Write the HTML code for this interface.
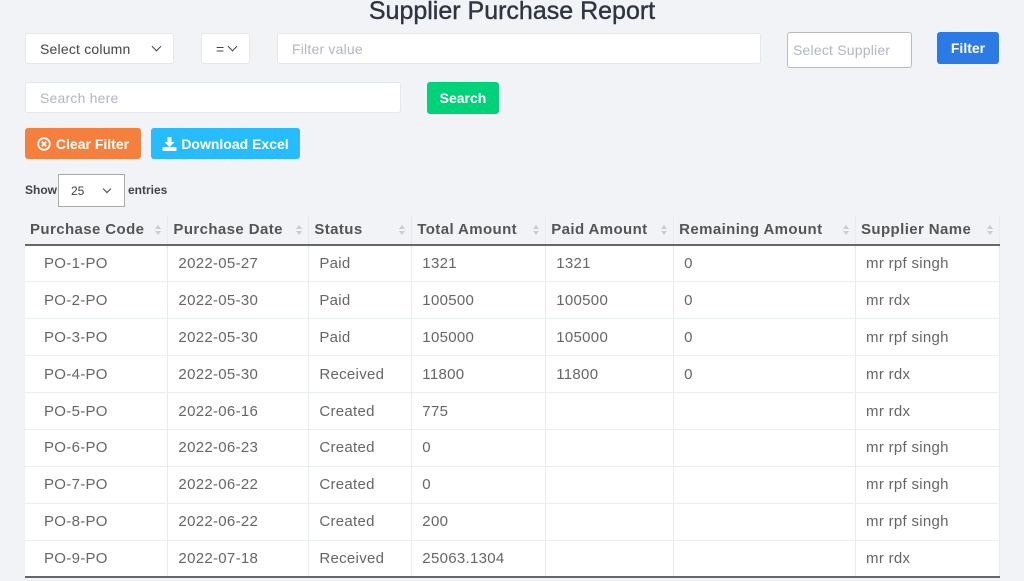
<!DOCTYPE html>
<html><head><meta charset="utf-8"><style>
*{box-sizing:border-box;margin:0;padding:0}
body{width:1024px;height:581px;background:#f2f3f6;font-family:"Liberation Sans",sans-serif;position:relative;overflow:hidden;color:#555}
.a{position:absolute}
h1{position:absolute;left:0;width:1024px;top:-3px;text-align:center;font-size:25px;font-weight:normal;color:#2f3540;-webkit-text-stroke:0.4px #2f3540}
.box{position:absolute;background:#fff;border:1px solid #e3e7ee;border-radius:3px;font-size:14px;display:flex;align-items:center;padding-left:14px;letter-spacing:.2px}
.ph{color:#b0b6c2}
.btn{position:absolute;color:#fff;font-weight:bold;font-size:14px;display:flex;align-items:center;justify-content:center;border-radius:3px}
.chev{position:absolute;width:7px;height:7px;border-right:1.5px solid #444;border-bottom:1.5px solid #444;transform:rotate(45deg)}
table{position:absolute;left:25px;top:215px;width:975px;border-collapse:collapse;font-size:15px}
th{height:30px;text-align:left;padding-left:5px;color:#555;font-weight:bold;letter-spacing:.4px;border-right:1px solid #e6ebf2;border-bottom:2px solid #666;position:relative}
th:after{content:"";position:absolute;right:6px;top:10px;border-left:3px solid transparent;border-right:3px solid transparent;border-bottom:4px solid #ccc}
th:before{content:"";position:absolute;right:6px;top:16px;border-left:3px solid transparent;border-right:3px solid transparent;border-top:4px solid #ccc}
td{height:36.9px;background:#fff;padding-left:10px;color:#666;letter-spacing:.3px;border-right:1px solid #e6ebf2;border-bottom:1px solid #e9eef5}
td:first-child{padding-left:19px}
tr:last-child td{border-bottom:2px solid #666}
</style></head><body>
<h1>Supplier Purchase Report</h1>
<div class="box" style="left:25px;top:33px;width:149px;height:31px;color:#444">Select column<span class="chev" style="left:127px;top:9px"></span></div>
<div class="box" style="left:201px;top:33px;width:49px;height:31px;color:#444">=<span class="chev" style="left:27px;top:9px"></span></div>
<div class="box ph" style="left:277px;top:33px;width:484px;height:31px">Filter value</div>
<div class="box ph" style="left:787px;top:32px;width:125px;height:36px;border:1px solid #bbb;padding-left:5px">Select Supplier</div>
<div class="btn" style="left:937px;top:32px;width:62px;height:32px;background:#2c7be5">Filter</div>
<div class="box ph" style="left:25px;top:82px;width:376px;height:31px">Search here</div>
<div class="btn" style="left:427px;top:82px;width:72px;height:32px;background:#00d27a">Search</div>
<div class="btn" style="left:25px;top:128px;width:116px;height:31px;background:#f5803e"><svg width="14" height="14" viewBox="0 0 14 14" style="margin-right:5px"><circle cx="7" cy="7" r="5.8" fill="none" stroke="#fff" stroke-width="1.8"/><path d="M4.8 4.8L9.2 9.2M9.2 4.8L4.8 9.2" stroke="#fff" stroke-width="1.8"/></svg>Clear Filter</div>
<div class="btn" style="left:151px;top:128px;width:149px;height:31px;background:#27bcfd"><svg width="15" height="14" viewBox="0 0 15 14" style="margin-right:4px"><path d="M5.5 0h4v5h3l-5 5-5-5h3z" fill="#fff"/><rect x="0.5" y="10" width="14" height="4" rx="1" fill="#fff"/></svg>Download Excel</div>
<div class="a" style="left:25px;top:183px;font-size:12px;font-weight:bold;color:#444">Show</div>
<div class="a" style="left:58px;top:174px;width:67px;height:33px;border:1px solid #aaa;background:#fff;font-size:12px;padding:9px 0 0 12px;color:#444">25<span class="chev" style="left:45px;top:11px;width:6px;height:6px"></span></div>
<div class="a" style="left:128px;top:183px;font-size:12px;font-weight:bold;color:#444">entries</div>
<table>
<colgroup><col style="width:143px"><col style="width:141px"><col style="width:103px"><col style="width:134px"><col style="width:128px"><col style="width:182px"><col style="width:144px"></colgroup>
<tr><th>Purchase Code</th><th>Purchase Date</th><th>Status</th><th>Total Amount</th><th>Paid Amount</th><th>Remaining Amount</th><th>Supplier Name</th></tr>
<tr><td>PO-1-PO</td><td>2022-05-27</td><td>Paid</td><td>1321</td><td>1321</td><td>0</td><td>mr rpf singh</td></tr>
<tr><td>PO-2-PO</td><td>2022-05-30</td><td>Paid</td><td>100500</td><td>100500</td><td>0</td><td>mr rdx</td></tr>
<tr><td>PO-3-PO</td><td>2022-05-30</td><td>Paid</td><td>105000</td><td>105000</td><td>0</td><td>mr rpf singh</td></tr>
<tr><td>PO-4-PO</td><td>2022-05-30</td><td>Received</td><td>11800</td><td>11800</td><td>0</td><td>mr rdx</td></tr>
<tr><td>PO-5-PO</td><td>2022-06-16</td><td>Created</td><td>775</td><td></td><td></td><td>mr rdx</td></tr>
<tr><td>PO-6-PO</td><td>2022-06-23</td><td>Created</td><td>0</td><td></td><td></td><td>mr rpf singh</td></tr>
<tr><td>PO-7-PO</td><td>2022-06-22</td><td>Created</td><td>0</td><td></td><td></td><td>mr rpf singh</td></tr>
<tr><td>PO-8-PO</td><td>2022-06-22</td><td>Created</td><td>200</td><td></td><td></td><td>mr rpf singh</td></tr>
<tr><td>PO-9-PO</td><td>2022-07-18</td><td>Received</td><td>25063.1304</td><td></td><td></td><td>mr rdx</td></tr>
</table>
</body></html>
